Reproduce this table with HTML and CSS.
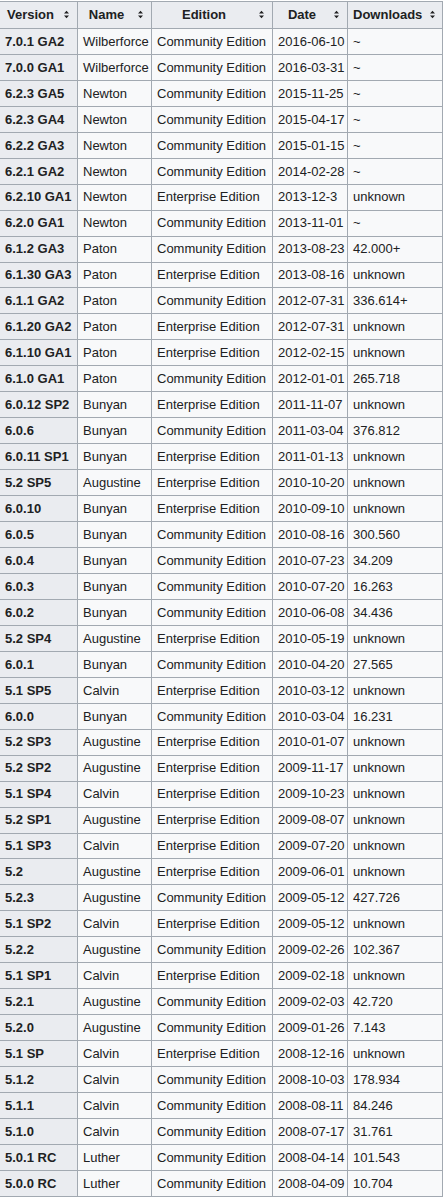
FILE: index.html
```html
<!DOCTYPE html>
<html>
<head>
<meta charset="utf-8">
<link rel="stylesheet" href="styles.css">
</head>
<body>
<table class="wikitable">
<colgroup>
<col class="c-version"><col class="c-name"><col class="c-edition"><col class="c-date"><col class="c-dl">
</colgroup>
<thead>
<tr>
<th><div class="hd"><span class="hd-text">Version</span><svg class="sort" width="21" height="9" viewBox="0 0 21 9"><path d="M8 3.6 L10.5 0.8 L13 3.6 Z M8 5.4 L10.5 8.2 L13 5.4 Z"/></svg></div></th>
<th><div class="hd"><span class="hd-text">Name</span><svg class="sort" width="21" height="9" viewBox="0 0 21 9"><path d="M8 3.6 L10.5 0.8 L13 3.6 Z M8 5.4 L10.5 8.2 L13 5.4 Z"/></svg></div></th>
<th><div class="hd"><span class="hd-text">Edition</span><svg class="sort" width="21" height="9" viewBox="0 0 21 9"><path d="M8 3.6 L10.5 0.8 L13 3.6 Z M8 5.4 L10.5 8.2 L13 5.4 Z"/></svg></div></th>
<th><div class="hd"><span class="hd-text">Date</span><svg class="sort" width="21" height="9" viewBox="0 0 21 9"><path d="M8 3.6 L10.5 0.8 L13 3.6 Z M8 5.4 L10.5 8.2 L13 5.4 Z"/></svg></div></th>
<th><div class="hd"><span class="hd-text">Downloads</span><svg class="sort" width="21" height="9" viewBox="0 0 21 9"><path d="M8 3.6 L10.5 0.8 L13 3.6 Z M8 5.4 L10.5 8.2 L13 5.4 Z"/></svg></div></th>
</tr>
</thead>
<tbody>
<tr><th>7.0.1 GA2</th><td>Wilberforce</td><td>Community Edition</td><td>2016-06-10</td><td>~</td></tr>
<tr><th>7.0.0 GA1</th><td>Wilberforce</td><td>Community Edition</td><td>2016-03-31</td><td>~</td></tr>
<tr><th>6.2.3 GA5</th><td>Newton</td><td>Community Edition</td><td>2015-11-25</td><td>~</td></tr>
<tr><th>6.2.3 GA4</th><td>Newton</td><td>Community Edition</td><td>2015-04-17</td><td>~</td></tr>
<tr><th>6.2.2 GA3</th><td>Newton</td><td>Community Edition</td><td>2015-01-15</td><td>~</td></tr>
<tr><th>6.2.1 GA2</th><td>Newton</td><td>Community Edition</td><td>2014-02-28</td><td>~</td></tr>
<tr><th>6.2.10 GA1</th><td>Newton</td><td>Enterprise Edition</td><td>2013-12-3</td><td>unknown</td></tr>
<tr><th>6.2.0 GA1</th><td>Newton</td><td>Community Edition</td><td>2013-11-01</td><td>~</td></tr>
<tr><th>6.1.2 GA3</th><td>Paton</td><td>Community Edition</td><td>2013-08-23</td><td>42.000+</td></tr>
<tr><th>6.1.30 GA3</th><td>Paton</td><td>Enterprise Edition</td><td>2013-08-16</td><td>unknown</td></tr>
<tr><th>6.1.1 GA2</th><td>Paton</td><td>Community Edition</td><td>2012-07-31</td><td>336.614+</td></tr>
<tr><th>6.1.20 GA2</th><td>Paton</td><td>Enterprise Edition</td><td>2012-07-31</td><td>unknown</td></tr>
<tr><th>6.1.10 GA1</th><td>Paton</td><td>Enterprise Edition</td><td>2012-02-15</td><td>unknown</td></tr>
<tr><th>6.1.0 GA1</th><td>Paton</td><td>Community Edition</td><td>2012-01-01</td><td>265.718</td></tr>
<tr><th>6.0.12 SP2</th><td>Bunyan</td><td>Enterprise Edition</td><td>2011-11-07</td><td>unknown</td></tr>
<tr><th>6.0.6</th><td>Bunyan</td><td>Community Edition</td><td>2011-03-04</td><td>376.812</td></tr>
<tr><th>6.0.11 SP1</th><td>Bunyan</td><td>Enterprise Edition</td><td>2011-01-13</td><td>unknown</td></tr>
<tr><th>5.2 SP5</th><td>Augustine</td><td>Enterprise Edition</td><td>2010-10-20</td><td>unknown</td></tr>
<tr><th>6.0.10</th><td>Bunyan</td><td>Enterprise Edition</td><td>2010-09-10</td><td>unknown</td></tr>
<tr><th>6.0.5</th><td>Bunyan</td><td>Community Edition</td><td>2010-08-16</td><td>300.560</td></tr>
<tr><th>6.0.4</th><td>Bunyan</td><td>Community Edition</td><td>2010-07-23</td><td>34.209</td></tr>
<tr><th>6.0.3</th><td>Bunyan</td><td>Community Edition</td><td>2010-07-20</td><td>16.263</td></tr>
<tr><th>6.0.2</th><td>Bunyan</td><td>Community Edition</td><td>2010-06-08</td><td>34.436</td></tr>
<tr><th>5.2 SP4</th><td>Augustine</td><td>Enterprise Edition</td><td>2010-05-19</td><td>unknown</td></tr>
<tr><th>6.0.1</th><td>Bunyan</td><td>Community Edition</td><td>2010-04-20</td><td>27.565</td></tr>
<tr><th>5.1 SP5</th><td>Calvin</td><td>Enterprise Edition</td><td>2010-03-12</td><td>unknown</td></tr>
<tr><th>6.0.0</th><td>Bunyan</td><td>Community Edition</td><td>2010-03-04</td><td>16.231</td></tr>
<tr><th>5.2 SP3</th><td>Augustine</td><td>Enterprise Edition</td><td>2010-01-07</td><td>unknown</td></tr>
<tr><th>5.2 SP2</th><td>Augustine</td><td>Enterprise Edition</td><td>2009-11-17</td><td>unknown</td></tr>
<tr><th>5.1 SP4</th><td>Calvin</td><td>Enterprise Edition</td><td>2009-10-23</td><td>unknown</td></tr>
<tr><th>5.2 SP1</th><td>Augustine</td><td>Enterprise Edition</td><td>2009-08-07</td><td>unknown</td></tr>
<tr><th>5.1 SP3</th><td>Calvin</td><td>Enterprise Edition</td><td>2009-07-20</td><td>unknown</td></tr>
<tr><th>5.2</th><td>Augustine</td><td>Enterprise Edition</td><td>2009-06-01</td><td>unknown</td></tr>
<tr><th>5.2.3</th><td>Augustine</td><td>Community Edition</td><td>2009-05-12</td><td>427.726</td></tr>
<tr><th>5.1 SP2</th><td>Calvin</td><td>Enterprise Edition</td><td>2009-05-12</td><td>unknown</td></tr>
<tr><th>5.2.2</th><td>Augustine</td><td>Community Edition</td><td>2009-02-26</td><td>102.367</td></tr>
<tr><th>5.1 SP1</th><td>Calvin</td><td>Enterprise Edition</td><td>2009-02-18</td><td>unknown</td></tr>
<tr><th>5.2.1</th><td>Augustine</td><td>Community Edition</td><td>2009-02-03</td><td>42.720</td></tr>
<tr><th>5.2.0</th><td>Augustine</td><td>Community Edition</td><td>2009-01-26</td><td>7.143</td></tr>
<tr><th>5.1 SP</th><td>Calvin</td><td>Enterprise Edition</td><td>2008-12-16</td><td>unknown</td></tr>
<tr><th>5.1.2</th><td>Calvin</td><td>Community Edition</td><td>2008-10-03</td><td>178.934</td></tr>
<tr><th>5.1.1</th><td>Calvin</td><td>Community Edition</td><td>2008-08-11</td><td>84.246</td></tr>
<tr><th>5.1.0</th><td>Calvin</td><td>Community Edition</td><td>2008-07-17</td><td>31.761</td></tr>
<tr><th>5.0.1 RC</th><td>Luther</td><td>Community Edition</td><td>2008-04-14</td><td>101.543</td></tr>
<tr><th>5.0.0 RC</th><td>Luther</td><td>Community Edition</td><td>2008-04-09</td><td>10.704</td></tr>
</tbody>
</table>
</body>
</html>
```

FILE: styles.css
```css
html, body {
  margin: 0;
  padding: 0;
  background: #ffffff;
}

.wikitable {
  margin: 1px 0 0 -1px;
  border-collapse: collapse;
  table-layout: fixed;
  width: 443px;
  font-family: "Liberation Sans", Arial, sans-serif;
  font-size: 13px;
  color: #202122;
  background: #f8f9fa;
  border: 1px solid #a2a9b1;
}

.c-version { width: 78px; }
.c-name { width: 74px; }
.c-edition { width: 121px; }
.c-date { width: 75px; }
.c-dl { width: 95px; }

.wikitable th,
.wikitable td {
  border: 1px solid #a2a9b1;
  padding: 2.8px 5px;
  line-height: 19.36px;
  white-space: nowrap;
  vertical-align: middle;
}

.wikitable td {
  text-align: left;
}

.wikitable tbody th {
  background: #eaecf0;
  font-weight: bold;
  text-align: left;
}

.wikitable thead th {
  background: #eaecf0;
  font-weight: bold;
  text-align: center;
  padding: 2.8px 0 2.8px 5px;
  line-height: 20.36px;
}

.hd {
  display: flex;
  align-items: center;
}

.hd-text {
  flex: 1;
  text-align: center;
  white-space: nowrap;
}

.sort {
  flex: none;
  display: block;
  fill: #202122;
}
```
